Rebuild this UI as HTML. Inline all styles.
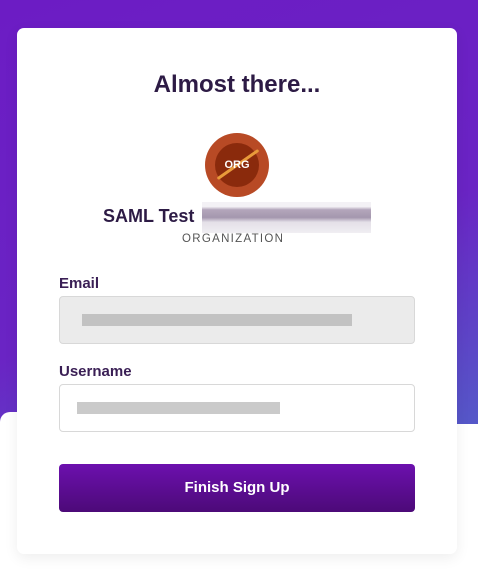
<!DOCTYPE html>
<html><head><style>
body{margin:0;width:478px;height:568px;position:relative;overflow:hidden;background:#fff;font-family:"Liberation Sans",sans-serif;}
.bg{position:absolute;left:0;top:0;width:478px;height:424px;background:linear-gradient(160deg,#6c1cc4 0%,#6a24c4 60%,#5558c8 100%);}
.bgw{position:absolute;left:0;top:412px;width:40px;height:160px;background:#fff;border-radius:10px 0 0 0;}
.card{position:absolute;left:17px;top:28px;width:440px;height:526px;background:#fff;border-radius:7px;box-shadow:0 4px 14px rgba(0,0,0,0.07);}
.bgw2{position:absolute;left:0;top:424px;width:478px;height:150px;background:#fff;}
h1{position:absolute;left:0;width:474px;top:71px;margin:0;text-align:center;font-size:24px;color:#2d1b45;font-weight:bold;}
.logo{position:absolute;left:205px;top:133px;width:64px;height:64px;border-radius:50%;background:#b84a25;}
.logo .in{position:absolute;left:10px;top:10px;width:44px;height:44px;border-radius:50%;background:#8a2a0c;}
.logo .st{position:absolute;left:8px;top:30px;width:50px;height:3px;background:#e89a3a;transform:rotate(-35deg);border-radius:2px;}
.logo span{position:absolute;left:0;width:64px;top:26px;text-align:center;color:#fff;font-size:11px;font-weight:bold;}
.name{position:absolute;left:103px;top:206px;font-size:18px;font-weight:bold;color:#2d1b45;}
.blur{position:absolute;left:202px;top:202px;width:169px;height:31px;background:linear-gradient(#f3f1f5 0,#f3f1f5 15%,#b3a6bb 25%,#a497ae 50%,#e4e0e8 65%,#f0eef2 100%);}
.org{position:absolute;left:182px;top:233px;font-size:11.5px;letter-spacing:1.3px;color:#555;}
.lbl{position:absolute;left:59px;font-size:15px;font-weight:bold;color:#3a1f55;}
.inp{position:absolute;left:59px;width:354px;height:46px;border:1px solid #d8d8d8;border-radius:4px;}
.bl{position:absolute;height:12px;opacity:.8;}
.btn{position:absolute;left:59px;top:464px;width:356px;height:48px;border-radius:4px;background:linear-gradient(#6c10ae,#4c0a78);color:#fff;font-weight:bold;font-size:15px;text-align:center;line-height:48px;}
</style></head><body>
<div class="bg"></div><div class="bgw2"></div><div class="bgw"></div>
<div class="card"></div>
<h1>Almost there...</h1>
<div class="logo"><div class="in"></div><div class="st"></div><span>ORG</span></div>
<div class="name">SAML Test</div>
<div class="blur"></div>
<div class="org">ORGANIZATION</div>
<div class="lbl" style="top:275px">Email</div>
<div class="inp" style="top:296px;background:#ebebeb"><div class="bl" style="left:22px;top:17px;width:270px;background:#b8b8b8"></div></div>
<div class="lbl" style="top:363px">Username</div>
<div class="inp" style="top:384px;background:#fff"><div class="bl" style="left:17px;top:17px;width:203px;background:#bdbdbd"></div></div>
<div class="btn">Finish Sign Up</div>
</body></html>
